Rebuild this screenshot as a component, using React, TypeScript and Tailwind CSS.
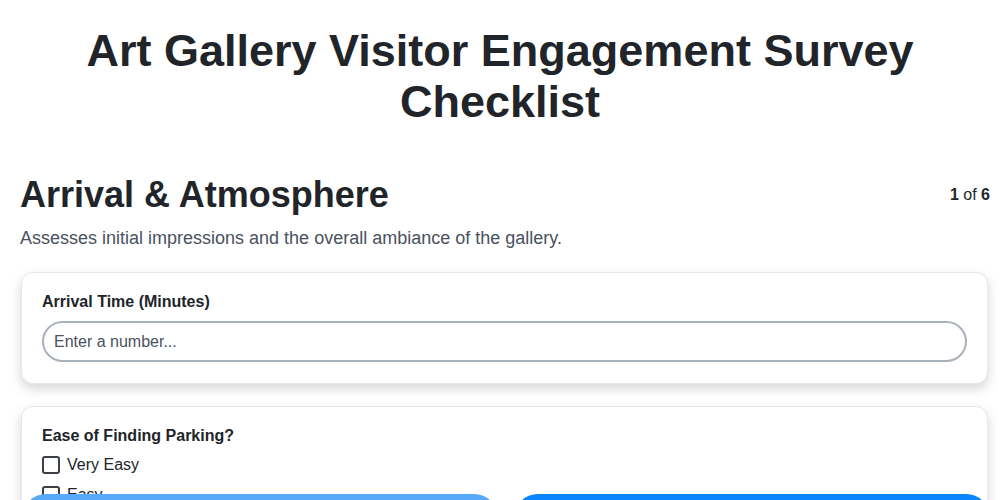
import React from 'react';

const parkingOptions = ['Very Easy', 'Easy', 'Neutral', 'Difficult', 'Very Difficult'];

const App: React.FC = () => {
  return (
    <div className="min-h-screen bg-white font-['Liberation_Sans',Arial,sans-serif] text-[#212529] pl-5 pr-[10px] pt-[25px] pb-24">
      <h1 className="mr-[10px] text-center text-[45px] leading-[51px] font-bold">
        Art Gallery Visitor Engagement Survey
        <br />
        Checklist
      </h1>

      {/* Section header */}
      <div className="mt-[48px] flex items-center justify-between">
        <h2 className="text-4xl font-bold">Arrival &amp; Atmosphere</h2>
        <span className="text-base">
          <b>1</b> of <b>6</b>
        </span>
      </div>
      <p className="mt-[9px] text-lg text-[#4a5160]">
        Assesses initial impressions and the overall ambiance of the gallery.
      </p>

      {/* Question cards */}
      <div className="mt-5 ml-px mr-[2px] flex flex-col gap-[22px]">
        <div className="rounded-xl border border-[#e6e7eb] bg-white px-5 pt-[17px] pb-[21px] shadow-[0_5px_12px_rgba(0,0,0,0.16)]">
          <label className="block mb-[7px] font-bold">Arrival Time (Minutes)</label>
          <input
            type="number"
            placeholder="Enter a number..."
            className="w-full h-[41px] rounded-full border-2 border-[#a9b1ba] px-2.5 text-base text-[#212529] placeholder:text-[#4b5160] outline-none"
          />
        </div>

        <div className="rounded-xl border border-[#e6e7eb] bg-white px-5 pt-[17px] pb-5 shadow-[0_5px_12px_rgba(0,0,0,0.16)]">
          <div className="mb-[5px] font-bold">Ease of Finding Parking?</div>
          <div className="flex flex-col gap-1.5">
            {parkingOptions.map((opt) => (
              <label key={opt} className="flex h-6 items-center gap-[7px]">
                <span className="w-[18px] h-[18px] rounded-[3px] border-2 border-[#3a3f4a] bg-white" />
                <span>{opt}</span>
              </label>
            ))}
          </div>
        </div>
      </div>

      {/* Navigation bar */}
      <div className="fixed inset-x-0 top-[494px] flex gap-4 pl-[22px] pr-[10px]">
        <button className="flex-1 h-12 rounded-full bg-[#58a9f8] text-white font-bold">Previous</button>
        <button className="flex-1 h-12 rounded-full bg-[#0a84ff] text-white font-bold">Next</button>
      </div>
    </div>
  );
};

export default App;
